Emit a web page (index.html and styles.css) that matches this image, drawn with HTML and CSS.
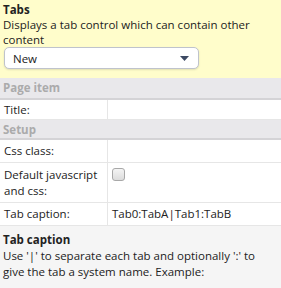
FILE: index.html
```html
<!DOCTYPE html>
<html lang="en">
  <head>
    <meta charset="UTF-8" />
    <title>Tabs</title>
    <link rel="stylesheet" href="styles.css">
  </head>
  <body>
    <div class="info">
      <div class="info-title">Tabs</div>
      <div class="info-text">Displays a tab control which can contain other content</div>
      <div class="select">
        <span>New</span>
        <svg class="caret" width="9" height="5" viewBox="0 0 9 5"><path d="M0 0h9L4.5 5z" fill="#3d4a63"/></svg>
      </div>
    </div>

    <div class="group">Page item</div>
    <div class="row row-short">
      <div class="label">Title:</div>
      <div class="value"></div>
    </div>

    <div class="group group-short">Setup</div>
    <div class="row">
      <div class="label">Css class:</div>
      <div class="value"></div>
    </div>
    <div class="row row-tall">
      <div class="label">Default javascript and css:</div>
      <div class="value"><span class="check"></span></div>
    </div>
    <div class="row">
      <div class="label">Tab caption:</div>
      <div class="value">Tab0:TabA|Tab1:TabB</div>
    </div>

    <div class="help">
      <div class="help-title">Tab caption</div>
      <div class="help-text">Use '|' to separate each tab and optionally ':' to give the tab a system name. Example:</div>
    </div>
  </body>
</html>
```

FILE: styles.css
```css
body {
  margin: 0;
  font-family: "Open Sans", sans-serif;
  font-size: 11.5px;
  line-height: 16px;
  color: #222;
  background: #fff;
  height: 288px;
  display: flex;
  flex-direction: column;
}

.info {
  background: #fffdcb;
  padding: 2px 3px 9px 3px;
  line-height: 15px;
}
.info-title {
  font-weight: bold;
}
.select {
  margin: 0 0 0 1px;
  width: 195px;
  height: 22px;
  box-sizing: border-box;
  border: 1px solid #bfc3cc;
  border-radius: 5px;
  background: #fff;
  display: flex;
  align-items: center;
  justify-content: space-between;
  padding: 0 9px 0 8px;
  box-shadow: 0 1px 2px rgba(0, 0, 0, 0.12);
}

.group {
  background: #e9e8eb;
  color: #ababab;
  font-weight: bold;
  padding: 2px 3px;
  height: 16px;
  border-bottom: 2px solid #d4d3d6;
}
.group-short {
  height: 15px;
  padding: 2px 3px 1px;
}

.row {
  display: flex;
  border-bottom: 1px solid #e6e6e6;
}
.label {
  width: 100px;
  padding: 3px 3px 3px 4px;
  border-right: 1px solid #e6e6e6;
}
.value {
  flex: 1;
  padding: 3px 4px;
}
.row-short .label,
.row-short .value {
  padding-top: 2px;
  padding-bottom: 1px;
}
.row-tall .label,
.row-tall .value {
  padding-top: 4px;
  padding-bottom: 3px;
}
.check {
  display: inline-block;
  width: 11px;
  height: 11px;
  border: 1px solid #a8a8a8;
  border-radius: 3px;
  background: linear-gradient(#f4f4f4, #dcdcdc);
  vertical-align: -2px;
}

.help {
  flex: 1;
  background: #f5f5f5;
  padding: 6px 3px;
}
.help-title {
  font-weight: bold;
}
```
